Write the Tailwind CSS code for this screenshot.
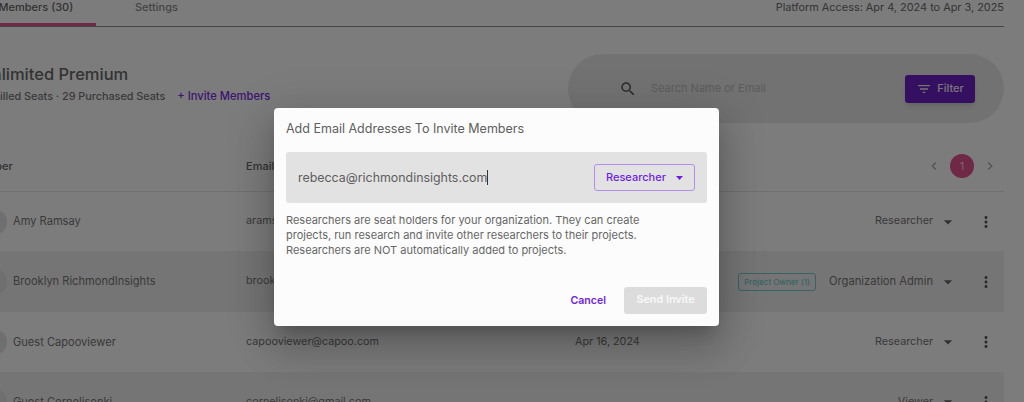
<!DOCTYPE html>
<html lang="en">
<head>
  <meta charset="UTF-8" />
  <title>Members</title>
  <script src="https://cdn.jsdelivr.net/npm/@tailwindcss/browser@4"></script>
</head>
<body class="bg-[#f8f8f8]">
  <div class="relative w-[1024px] h-[402px] overflow-hidden bg-[#f8f8f8] font-['Inter',sans-serif] text-[#747474]">
    <!-- page behind the dialog -->
    <div class="ml-[-6px] w-[1010px] h-[402px] overflow-hidden">
      <!-- tabs -->
      <div class="flex h-[27px] border-b border-[#8c8c8c]">
        <div class="w-[102px] h-[26px] border-b-[3px] border-[#e0508e] text-[11px] font-medium leading-[15px] pl-[4.5px] text-[#666666]">Members (30)</div>
        <div class="ml-[39px] text-[11px] font-medium leading-[15px] text-[#8a8a8a]">Settings</div>
        <div class="ml-auto text-[10.9px] leading-[15px] text-[#6a6a6a]">Platform Access: Apr 4, 2024 to Apr 3, 2025</div>
      </div>

      <!-- plan + search -->
      <div class="flex mt-[27px] h-[69px]">
        <div class="pt-[10px]">
          <div class="text-[16.5px] font-medium leading-[20px] ml-[-14.5px] text-[#666666]">Unlimited Premium</div>
          <div class="flex items-center mt-[5px] text-[10.8px] font-medium leading-[16px]">
            <span class="ml-[-17px]">30 Filled Seats · 29 Purchased Seats</span>
            <span class="ml-[12px] text-[11.2px] leading-[14px] mb-[2px] text-[#7a2be0]">+ Invite Members</span>
          </div>
        </div>
        <div class="ml-auto w-[436px] h-[69px] rounded-[35px] bg-[#e4e4e4] flex items-center">
          <svg class="ml-[51px]" width="18" height="18" viewBox="0 0 24 24" fill="#555555"><path d="M15.5 14h-.79l-.28-.27A6.47 6.47 0 0 0 16 9.5 6.5 6.5 0 1 0 9.5 16c1.61 0 3.09-.59 4.23-1.57l.27.28v.79l5 4.99L20.49 19l-4.99-5zm-6 0C7.01 14 5 11.99 5 9.5S7.01 5 9.5 5 14 7.01 14 9.5 11.99 14 9.5 14z"/></svg>
          <span class="ml-[14px] text-[11px] text-[#b8b8b8]">Search Name or Email</span>
          <div class="ml-auto mr-[29px] w-[70px] h-[28px] rounded-[3px] bg-[#6a20c0] shadow-md flex items-center justify-center gap-[5px] text-white/90 text-[11px] font-medium">
            <svg width="16" height="16" viewBox="0 0 24 24" fill="#e8e8e8"><path d="M10 18h4v-2h-4v2zM3 6v2h18V6H3zm3 7h12v-2H6v2z"/></svg>
            <span>Filter</span>
          </div>
        </div>
      </div>

      <!-- table header -->
      <div class="flex items-center h-[69px] pt-[18px] border-b border-[#e0e0e0] text-[11px] font-medium text-[#666666]">
        <div class="w-[277px] ml-[-25px]">Member</div>
        <div>Email</div>
        <div class="ml-auto flex items-center mr-[6px]">
          <svg width="16" height="16" viewBox="0 0 24 24" fill="#a8a8a8"><path d="M15.41 7.41 14 6l-6 6 6 6 1.41-1.41L10.83 12z"/></svg>
          <span class="mx-[8px] w-[24px] h-[24px] rounded-full bg-[#e0508e] text-white/70 text-[11px] font-normal flex items-center justify-center">1</span>
          <svg width="16" height="16" viewBox="0 0 24 24" fill="#a8a8a8"><path d="M10 6 8.59 7.41 13.17 12l-4.58 4.59L10 18l6-6z"/></svg>
        </div>
      </div>

      <!-- rows -->
      <div class="flex items-center h-[59px] bg-[#f8f8f8] text-[11.1px]">
        <span class="w-[26px] h-[26px] rounded-full bg-[#dedede] ml-[-13px] shrink-0"></span>
        <span class="w-[233px] ml-[6px]">Amy Ramsay</span>
        <span class="text-[10.8px]">aramsay@richmondinsights.com</span>
        <span class="ml-auto text-[10.8px]">Researcher</span>
        <svg class="ml-[5px]" width="20" height="20" viewBox="0 0 24 24" fill="#666666"><path d="m7 10 5 5 5-5z"/></svg>
        <svg class="ml-[19px] mr-[9px]" width="18" height="18" viewBox="0 0 24 24" fill="#555555"><path d="M12 8c1.1 0 2-.9 2-2s-.9-2-2-2-2 .9-2 2 .9 2 2 2zm0 2c-1.1 0-2 .9-2 2s.9 2 2 2 2-.9 2-2-.9-2-2-2zm0 6c-1.1 0-2 .9-2 2s.9 2 2 2 2-.9 2-2-.9-2-2-2z"/></svg>
      </div>
      <div class="flex items-center h-[61px] bg-[#ebebeb] text-[11.1px]">
        <span class="w-[26px] h-[26px] rounded-full bg-[#dedede] ml-[-13px] shrink-0"></span>
        <span class="w-[233px] ml-[6px]">Brooklyn RichmondInsights</span>
        <span class="text-[10.8px]">brooklyn@richmondinsights.com</span>
        <span class="ml-auto mr-[13px] h-[18px] px-[5px] rounded-[3px] border border-[#6cc8c8] text-[#6cc8c8] text-[8px] font-medium flex items-center">Project Owner (1)</span>
        <span class="text-[11.2px]">Organization Admin</span>
        <svg class="ml-[5px]" width="20" height="20" viewBox="0 0 24 24" fill="#666666"><path d="m7 10 5 5 5-5z"/></svg>
        <svg class="ml-[19px] mr-[9px]" width="18" height="18" viewBox="0 0 24 24" fill="#555555"><path d="M12 8c1.1 0 2-.9 2-2s-.9-2-2-2-2 .9-2 2 .9 2 2 2zm0 2c-1.1 0-2 .9-2 2s.9 2 2 2 2-.9 2-2-.9-2-2-2zm0 6c-1.1 0-2 .9-2 2s.9 2 2 2 2-.9 2-2-.9-2-2-2z"/></svg>
      </div>
      <div class="flex items-center h-[60px] bg-[#f8f8f8] text-[11.1px]">
        <span class="w-[26px] h-[26px] rounded-full bg-[#dedede] ml-[-13px] shrink-0"></span>
        <span class="w-[233px] ml-[6px]">Guest Capooviewer</span>
        <span class="w-[329px] text-[10.8px]">capooviewer@capoo.com</span>
        <span class="text-[10.8px]">Apr 16, 2024</span>
        <span class="ml-auto text-[10.8px]">Researcher</span>
        <svg class="ml-[5px]" width="20" height="20" viewBox="0 0 24 24" fill="#666666"><path d="m7 10 5 5 5-5z"/></svg>
        <svg class="ml-[19px] mr-[9px]" width="18" height="18" viewBox="0 0 24 24" fill="#555555"><path d="M12 8c1.1 0 2-.9 2-2s-.9-2-2-2-2 .9-2 2 .9 2 2 2zm0 2c-1.1 0-2 .9-2 2s.9 2 2 2 2-.9 2-2-.9-2-2-2zm0 6c-1.1 0-2 .9-2 2s.9 2 2 2 2-.9 2-2-.9-2-2-2z"/></svg>
      </div>
      <div class="flex items-center h-[60px] bg-[#ebebeb] text-[11.1px]">
        <span class="w-[26px] h-[26px] rounded-full bg-[#dedede] ml-[-13px] shrink-0"></span>
        <span class="w-[233px] ml-[6px]">Guest Cornelisonki</span>
        <span class="w-[329px] text-[10.8px]">cornelisonki@gmail.com</span>
        <span class="ml-auto text-[10.8px]">Viewer</span>
        <svg class="ml-[5px]" width="20" height="20" viewBox="0 0 24 24" fill="#666666"><path d="m7 10 5 5 5-5z"/></svg>
        <svg class="ml-[19px] mr-[9px]" width="18" height="18" viewBox="0 0 24 24" fill="#555555"><path d="M12 8c1.1 0 2-.9 2-2s-.9-2-2-2-2 .9-2 2 .9 2 2 2zm0 2c-1.1 0-2 .9-2 2s.9 2 2 2 2-.9 2-2-.9-2-2-2zm0 6c-1.1 0-2 .9-2 2s.9 2 2 2 2-.9 2-2-.9-2-2-2z"/></svg>
      </div>
    </div>

    <!-- overlay -->
    <div class="absolute inset-0 bg-black/50"></div>

    <!-- dialog -->
    <div class="absolute left-[274px] top-[108px] w-[445px] h-[218px] rounded-[4px] bg-[#fcfcfc] px-[12px] pt-[13px] shadow-[0_11px_15px_-7px_rgba(0,0,0,0.2),0_24px_38px_3px_rgba(0,0,0,0.14),0_9px_46px_8px_rgba(0,0,0,0.12)]">
      <div class="text-[12.5px] leading-[15px] text-[#5e5e5e]">Add Email Addresses To Invite Members</div>
      <div class="mt-[16px] h-[51px] rounded-[3px] bg-[#e2e2e2] flex items-center pl-[12px] pr-[12px]">
        <span class="text-[12.4px] text-[#5e5e5e] border-r border-[#333333] leading-[15px]">rebecca@richmondinsights.com</span>
        <div class="ml-auto w-[101px] h-[27px] rounded-[3px] border border-[#b48ee8] flex items-center pl-[11px] gap-[10px] text-[#6f1ee0] text-[11px] font-medium">
          <span>Researcher</span>
          <svg class="w-[7px] h-[4px]" viewBox="0 0 7 4" fill="#6f1ee0"><path d="M0 0h7L3.5 4z"/></svg>
        </div>
      </div>
      <div class="mt-[10px] w-[355px] text-[11px] leading-[15px] text-[#666666]">
        Researchers are seat holders for your organization. They can create projects, run research and invite other researchers to their projects. Researchers are NOT automatically added to projects.
      </div>
      <div class="mt-[29px] flex items-center justify-end">
        <span class="text-[10.6px] font-semibold text-[#6f1ee0]">Cancel</span>
        <span class="ml-[18px] w-[83px] h-[27px] rounded-[3px] bg-[#dcdcdc] text-white/80 text-[10.8px] font-semibold flex items-center justify-center">Send Invite</span>
      </div>
    </div>
  </div>
</body>
</html>
